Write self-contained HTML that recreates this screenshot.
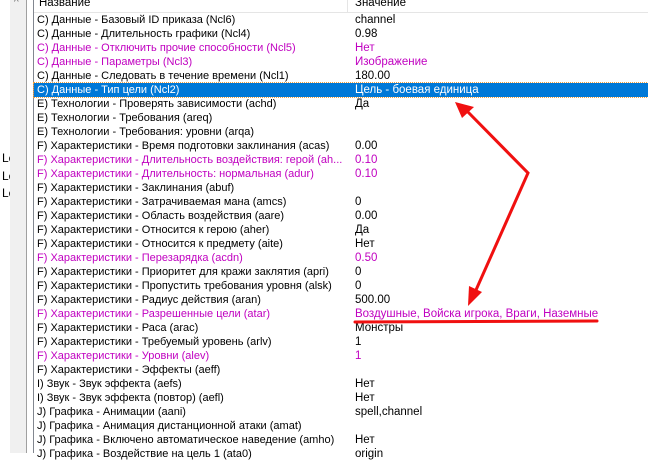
<!DOCTYPE html>
<html><head><meta charset="utf-8"><style>
body{margin:0;width:648px;height:453px;overflow:hidden;background:#fff;position:relative;font-family:"Liberation Sans","DejaVu Sans",sans-serif;font-size:11px;}
.sb{position:absolute;left:10px;top:0;width:16px;height:453px;background:#f0f0f0;}
.l1{position:absolute;left:26px;top:0;width:1px;height:453px;background:#a0a0a0;}
.l2{position:absolute;left:33px;top:0;width:1px;height:453px;background:#828790;}
.hdr{position:absolute;left:34px;top:0;width:614px;height:12px;background:#fff;border-bottom:1px solid #e5e5e5;overflow:hidden;}
.hdr span{position:absolute;top:-3px;font-size:11.5px;}
.hsep{position:absolute;left:313px;top:0;width:1px;height:12px;background:#e5e5e5;}
.row{position:absolute;left:34px;width:614px;height:14px;line-height:14px;white-space:nowrap;}
.row .a{position:absolute;left:3px;width:312px;overflow:hidden;}
.row .b{position:absolute;left:321px;font-size:11.5px;}
.m{color:#c000c0;}
.sel{background:#0078d7;color:#fff;outline:1px dotted #f0a040;}
.le{position:absolute;left:2px;font-size:12px;width:8px;overflow:hidden;}
</style></head><body>
<div class="sb"><div style="position:absolute;left:4px;top:-3px;font-size:10px;color:#606060">^</div></div>
<div class="l1"></div><div class="l2"></div>
<div class="le" style="top:151px">Le</div><div class="le" style="top:169px">Le</div><div class="le" style="top:186px">Le</div>
<div class="hdr"><span style="left:5px">Название</span><span style="left:321px">Значение</span><div class="hsep"></div></div>
<div class="row" style="top:13px"><span class="a">C) Данные - Базовый ID приказа (Ncl6)</span><span class="b">channel</span></div>
<div class="row" style="top:27px"><span class="a">C) Данные - Длительность графики (Ncl4)</span><span class="b">0.98</span></div>
<div class="row m" style="top:41px"><span class="a">C) Данные - Отключить прочие способности (Ncl5)</span><span class="b">Нет</span></div>
<div class="row m" style="top:55px"><span class="a">C) Данные - Параметры (Ncl3)</span><span class="b">Изображение</span></div>
<div class="row" style="top:69px"><span class="a">C) Данные - Следовать в течение времени (Ncl1)</span><span class="b">180.00</span></div>
<div class="row sel" style="top:83px"><span class="a">C) Данные - Тип цели (Ncl2)</span><span class="b">Цель - боевая единица</span></div>
<div class="row" style="top:97px"><span class="a">E) Технологии - Проверять зависимости (achd)</span><span class="b">Да</span></div>
<div class="row" style="top:111px"><span class="a">E) Технологии - Требования (areq)</span></div>
<div class="row" style="top:125px"><span class="a">E) Технологии - Требования: уровни (arqa)</span></div>
<div class="row" style="top:139px"><span class="a">F) Характеристики - Время подготовки заклинания (acas)</span><span class="b">0.00</span></div>
<div class="row m" style="top:153px"><span class="a">F) Характеристики - Длительность воздействия: герой (ah...</span><span class="b">0.10</span></div>
<div class="row m" style="top:167px"><span class="a">F) Характеристики - Длительность: нормальная (adur)</span><span class="b">0.10</span></div>
<div class="row" style="top:181px"><span class="a">F) Характеристики - Заклинания (abuf)</span></div>
<div class="row" style="top:195px"><span class="a">F) Характеристики - Затрачиваемая мана (amcs)</span><span class="b">0</span></div>
<div class="row" style="top:209px"><span class="a">F) Характеристики - Область воздействия (aare)</span><span class="b">0.00</span></div>
<div class="row" style="top:223px"><span class="a">F) Характеристики - Относится к герою (aher)</span><span class="b">Да</span></div>
<div class="row" style="top:237px"><span class="a">F) Характеристики - Относится к предмету (aite)</span><span class="b">Нет</span></div>
<div class="row m" style="top:251px"><span class="a">F) Характеристики - Перезарядка (acdn)</span><span class="b">0.50</span></div>
<div class="row" style="top:265px"><span class="a">F) Характеристики - Приоритет для кражи заклятия (apri)</span><span class="b">0</span></div>
<div class="row" style="top:279px"><span class="a">F) Характеристики - Пропустить требования уровня (alsk)</span><span class="b">0</span></div>
<div class="row" style="top:293px"><span class="a">F) Характеристики - Радиус действия (aran)</span><span class="b">500.00</span></div>
<div class="row m" style="top:307px"><span class="a">F) Характеристики - Разрешенные цели (atar)</span><span class="b">Воздушные, Войска игрока, Враги, Наземные</span></div>
<div class="row" style="top:321px"><span class="a">F) Характеристики - Раса (arac)</span><span class="b">Монстры</span></div>
<div class="row" style="top:335px"><span class="a">F) Характеристики - Требуемый уровень (arlv)</span><span class="b">1</span></div>
<div class="row m" style="top:349px"><span class="a">F) Характеристики - Уровни (alev)</span><span class="b">1</span></div>
<div class="row" style="top:363px"><span class="a">F) Характеристики - Эффекты (aeff)</span></div>
<div class="row" style="top:377px"><span class="a">I) Звук - Звук эффекта (aefs)</span><span class="b">Нет</span></div>
<div class="row" style="top:391px"><span class="a">I) Звук - Звук эффекта (повтор) (aefl)</span><span class="b">Нет</span></div>
<div class="row" style="top:405px"><span class="a">J) Графика - Анимации (aani)</span><span class="b">spell,channel</span></div>
<div class="row" style="top:419px"><span class="a">J) Графика - Анимация дистанционной атаки (amat)</span></div>
<div class="row" style="top:433px"><span class="a">J) Графика - Включено автоматическое наведение (amho)</span><span class="b">Нет</span></div>
<div class="row" style="top:447px"><span class="a">J) Графика - Воздействие на цель 1 (ata0)</span><span class="b">origin</span></div>
<svg width="648" height="453" style="position:absolute;left:0;top:0" xmlns="http://www.w3.org/2000/svg">
<g stroke="#f01010" stroke-width="3" fill="none" stroke-linecap="round">
<path d="M466 110 L528 173 L476 290"/>
<path d="M355 322 L597 321"/>
</g>
<g fill="#f01010">
<polygon points="455,102 474,107 462,118"/>
<polygon points="468,306 469,286 482,292"/>
</g>
</svg>
</body></html>
